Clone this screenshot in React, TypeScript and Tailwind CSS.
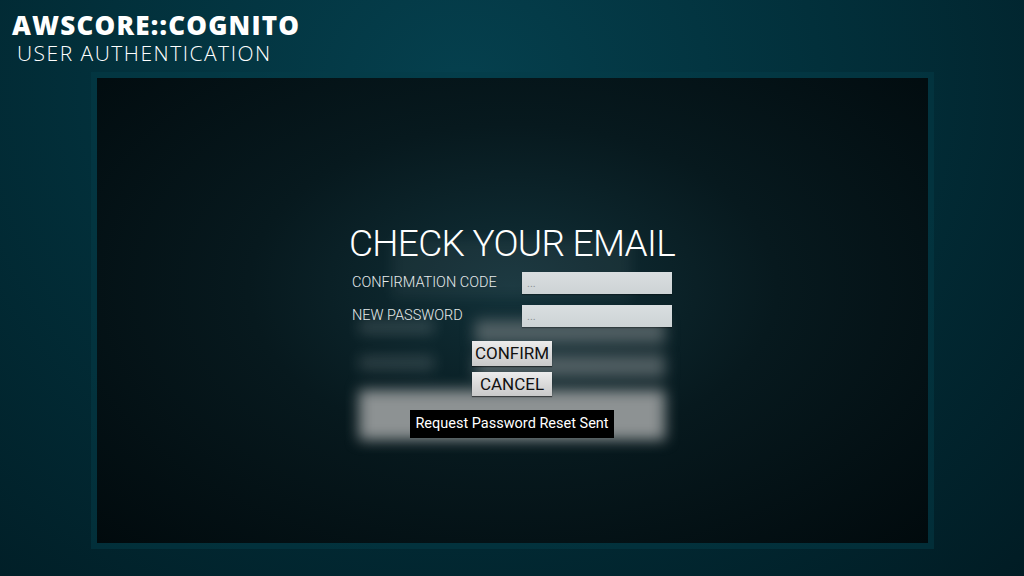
export default function App() {
  return (
    <main className="w-[1024px] h-[576px] overflow-hidden bg-[radial-gradient(ellipse_at_45%_15%,#05404e_0%,#02303b_45%,#011c24_100%)] font-['Roboto',sans-serif]">
      <header className="pl-[12px] pt-[11px] h-[78px] text-white">
        <h1 className="font-['Open_Sans',sans-serif] font-extrabold text-[26px] leading-[28px] tracking-[1.2px]">
          AWSCORE::COGNITO
        </h1>
        <p className="mt-[2px] pl-[5px] font-['Open_Sans',sans-serif] font-light text-[21px] leading-[24px] tracking-[1.5px]">
          USER AUTHENTICATION
        </p>
      </header>

      <section className="relative mx-auto w-[831px] h-[465px] overflow-hidden shadow-[0_0_0_6px_rgba(4,60,72,0.5)] bg-[radial-gradient(ellipse_at_50%_45%,#113038_0%,#07191e_45%,#010a0d_100%)]">
        {/* blurred login form behind */}
        <div className="absolute inset-0 blur-[7px] pointer-events-none" aria-hidden>
          <div className="absolute left-[262px] top-[160px] w-[306px] h-[72px] flex justify-center">
            <div className="w-[240px] h-[60px] bg-white/5" />
          </div>
          <div className="absolute left-[262px] top-[242px] w-[75px] h-[14px] bg-white/15" />
          <div className="absolute left-[378px] top-[242px] w-[190px] h-[24px] bg-[#6c7679]/70" />
          <div className="absolute left-[262px] top-[278px] w-[75px] h-[14px] bg-white/15" />
          <div className="absolute left-[378px] top-[276px] w-[190px] h-[24px] bg-[#6c7679]/70" />
          <div className="absolute left-[262px] top-[312px] w-[306px] h-[50px] bg-[#8d9293]" />
        </div>

        <div className="relative flex flex-col items-center pt-[143px]">
          <h2 className="font-light text-[37px] leading-[46px] text-white tracking-[-0.7px]">
            CHECK YOUR EMAIL
          </h2>
          <div className="mt-[5px] w-[320px] flex flex-col gap-[11px]">
            <div className="flex items-center justify-between">
              <label className="font-light text-[14.5px] text-[#e6eaeb]">
                CONFIRMATION CODE
              </label>
              <input
                placeholder="..."
                className="w-[150px] h-[22px] px-[5px] text-[11px] bg-[linear-gradient(180deg,#d9dee0,#cdd3d5)] shadow-[0_1px_1px_rgba(0,0,0,0.3)] placeholder:text-[#8a9094] outline-none"
              />
            </div>
            <div className="flex items-center justify-between">
              <label className="font-light text-[14.5px] text-[#e6eaeb]">
                NEW PASSWORD
              </label>
              <input
                placeholder="..."
                className="w-[150px] h-[22px] px-[5px] text-[11px] bg-[linear-gradient(180deg,#d9dee0,#cdd3d5)] shadow-[0_1px_1px_rgba(0,0,0,0.3)] placeholder:text-[#8a9094] outline-none"
              />
            </div>
          </div>
          <button className="mt-[14px] w-[80px] h-[25px] text-[17px] leading-none text-[#111] bg-[linear-gradient(180deg,#ececec,#c9c9c9)] shadow-[0_1px_1px_rgba(0,0,0,0.5)]">
            CONFIRM
          </button>
          <button className="mt-[6px] w-[80px] h-[24px] text-[17px] leading-none text-[#111] bg-[linear-gradient(180deg,#ececec,#c9c9c9)] shadow-[0_1px_1px_rgba(0,0,0,0.5)]">
            CANCEL
          </button>
          <div className="mt-[14px] w-[204px] h-[28px] flex items-center justify-center bg-black text-white text-[14.5px]">
            Request Password Reset Sent
          </div>
        </div>
      </section>
    </main>
  );
}
